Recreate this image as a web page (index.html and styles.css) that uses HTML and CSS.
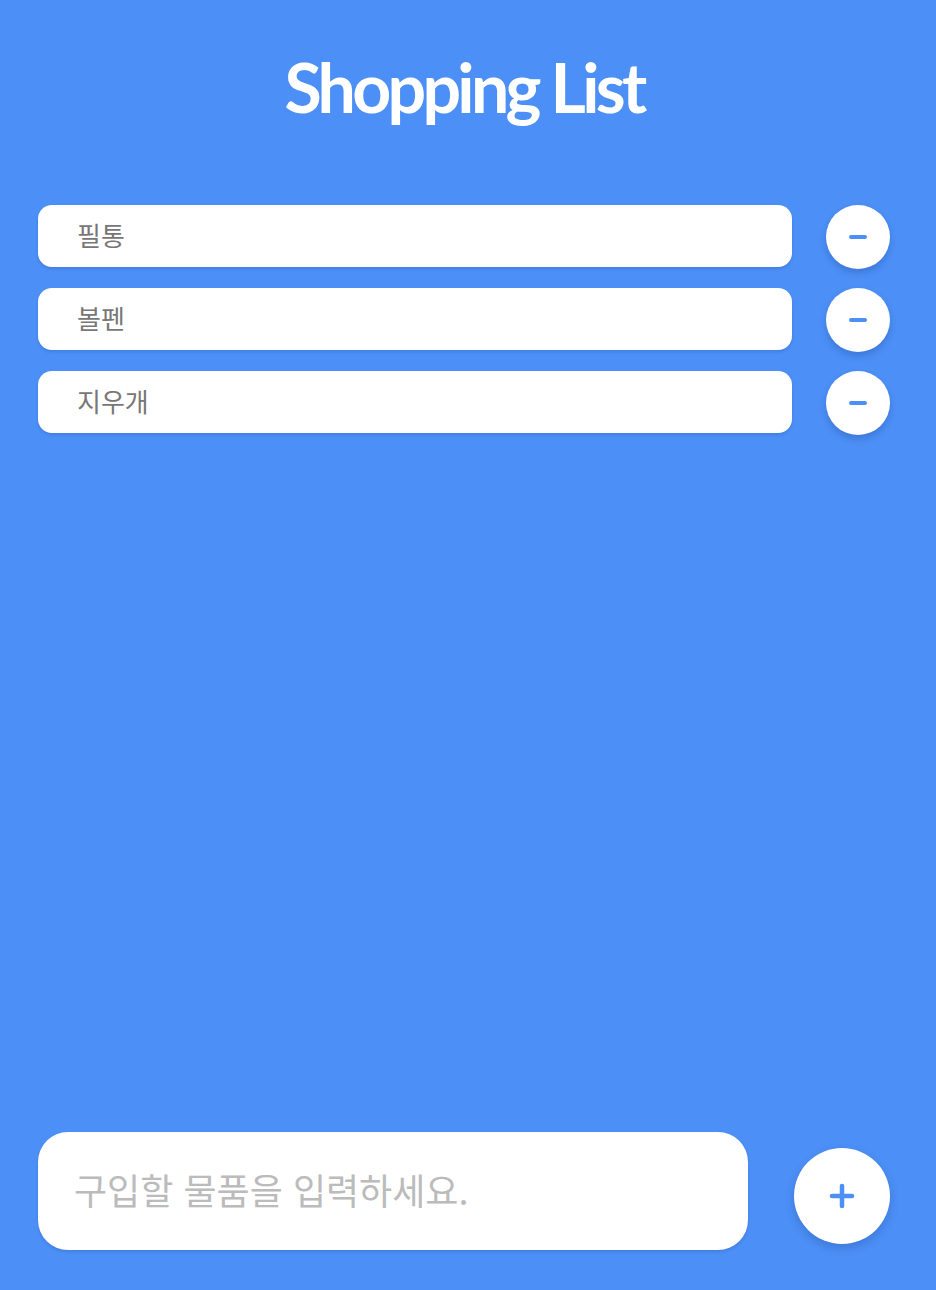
FILE: index.html
```html
<!DOCTYPE html>
<html lang="ko">
<head>
<meta charset="utf-8">
<title>Shopping List</title>
<link rel="stylesheet" href="styles.css">
</head>
<body>
<div class="app">
  <h1 class="title">Shopping List</h1>
  <ul class="list">
    <li class="item">
      <div class="item-box">필통</div>
      <button class="btn-remove" aria-label="삭제"><span class="minus"></span></button>
    </li>
    <li class="item">
      <div class="item-box">볼펜</div>
      <button class="btn-remove" aria-label="삭제"><span class="minus"></span></button>
    </li>
    <li class="item">
      <div class="item-box">지우개</div>
      <button class="btn-remove" aria-label="삭제"><span class="minus"></span></button>
    </li>
  </ul>
  <div class="footer">
    <input class="input" type="text" placeholder="구입할 물품을 입력하세요.">
    <button class="btn-add" aria-label="추가">
      <svg width="26" height="26" viewBox="0 0 26 26"><path d="M13 3v20M3 13h20" stroke="#4c8ff6" stroke-width="4.5" stroke-linecap="round" fill="none"/></svg>
    </button>
  </div>
</div>
</body>
</html>
```

FILE: styles.css
```css
* { box-sizing: border-box; }
html, body {
  margin: 0;
  padding: 0;
  background: #4c8ff6;
}
.app {
  height: 1290px;
  display: flex;
  flex-direction: column;
  padding: 0 46px 40px 38px;
  font-family: "Noto Sans CJK KR", "Noto Sans", sans-serif;
}
.title {
  margin: 47px 0 0;
  text-align: center;
  font-family: Lato, "Noto Sans", sans-serif;
  font-weight: 700;
  font-size: 68px;
  letter-spacing: -3.7px;
  line-height: 80px;
  color: #fff;
}
.list {
  list-style: none;
  margin: 78px 0 0;
  padding: 0;
  display: flex;
  flex-direction: column;
  gap: 19px;
}
.item {
  display: flex;
  align-items: flex-start;
  gap: 34px;
}
.item-box {
  flex: 1;
  height: 62px;
  background: #fff;
  border-radius: 14px;
  padding: 0 0 4px 39px;
  display: flex;
  align-items: center;
  font-size: 26px;
  color: #777;
  box-shadow: 0 2px 3px rgba(30, 70, 150, 0.2);
}
.btn-remove {
  width: 64px;
  height: 64px;
  border: none;
  border-radius: 50%;
  background: #fff;
  padding: 0;
  display: flex;
  align-items: center;
  justify-content: center;
  box-shadow: 0 4px 6px rgba(30, 70, 150, 0.3);
}
.minus {
  display: block;
  width: 18px;
  height: 4px;
  border-radius: 2px;
  background: #4c8ff6;
}
.footer {
  margin-top: auto;
  display: flex;
  align-items: center;
  gap: 46px;
}
.input {
  flex: 1;
  height: 118px;
  border: none;
  border-radius: 30px;
  background: #fff;
  padding: 0 0 5px 36px;
  font-family: "Noto Sans CJK KR", "Noto Sans", sans-serif;
  font-size: 36px;
  color: #555;
  outline: none;
  box-shadow: 0 2px 3px rgba(30, 70, 150, 0.2);
}
.input::placeholder { color: #bbb; }
.btn-add {
  width: 96px;
  height: 96px;
  border: none;
  border-radius: 50%;
  background: #fff;
  padding: 0;
  display: flex;
  align-items: center;
  justify-content: center;
  box-shadow: 0 4px 8px rgba(30, 70, 150, 0.3);
  margin-top: 10px;
}
```
